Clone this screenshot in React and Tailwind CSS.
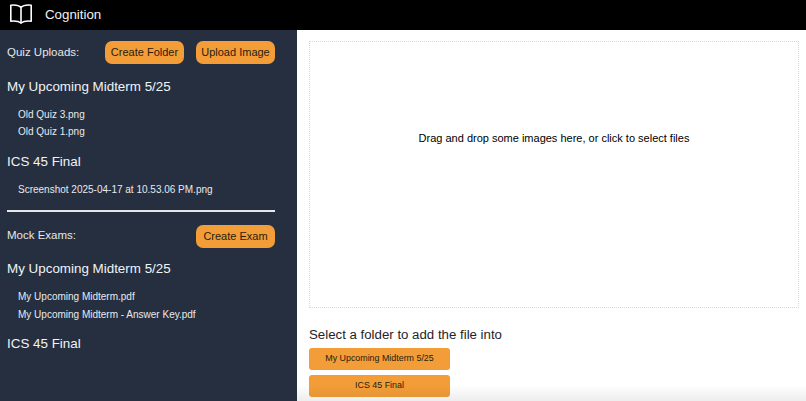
import React from "react";

const font = "font-['Liberation_Sans',Arial,sans-serif]";

function BookIcon() {
  return (
    <svg className="-mt-[3px]" width="24" height="22" viewBox="0 0 24 22" fill="none" stroke="white" strokeWidth="1.6" strokeLinejoin="round" strokeLinecap="round">
      <path d="M12 4.5C10 2.4 6 1.8 1.8 2.2V18.2C6 17.8 9.5 18 12 20C14.5 18 18 17.8 22.2 18.2V2.2C18 1.8 14 2.4 12 4.5Z" />
      <path d="M12 4.5V20" />
    </svg>
  );
}

function SideButton({ children }) {
  return (
    <button className="w-[79px] h-[23px] shrink-0 rounded-[7px] bg-[#f29d38] text-[11px] text-[#2a1c0c] whitespace-nowrap">
      {children}
    </button>
  );
}

function Folder({ name, files }) {
  return (
    <div>
      <h3 className="text-[13.4px] leading-[18px] text-[#f1f3f5]">{name}</h3>
      {files.length > 0 && (
        <ul className="mt-[10px] pl-[11px]">
          {files.map((f) => (
            <li key={f} className="text-[10px] leading-[17.5px] text-[#e8eaed] whitespace-nowrap">{f}</li>
          ))}
        </ul>
      )}
    </div>
  );
}

export default function App() {
  return (
    <div className={`${font} relative w-[806px] h-[401px] overflow-hidden flex flex-col bg-white`}>
      <header className="h-[30px] shrink-0 bg-black flex items-center pl-[9px] gap-[12px]">
        <BookIcon />
        <span className="text-[13.3px] text-[#f2f2f2]">Cognition</span>
      </header>

      <div className="flex flex-1 min-h-0">
        <aside className="w-[297px] shrink-0 bg-[#252f3f] pl-[7px] pr-[22px] pt-[11px]">
          <div className="flex items-center">
            <span className="text-[11.5px] text-[#e5e7eb] flex-1">Quiz Uploads:</span>
            <div className="flex gap-[12px]">
              <SideButton>Create Folder</SideButton>
              <SideButton>Upload Image</SideButton>
            </div>
          </div>

          <div className="mt-[13.5px] flex flex-col gap-[12px]">
            <Folder name="My Upcoming Midterm 5/25" files={["Old Quiz 3.png", "Old Quiz 1.png"]} />
            <Folder name="ICS 45 Final" files={["Screenshot 2025-04-17 at 10.53.06 PM.png"]} />
          </div>

          <hr className="mt-[11.5px] border-0 h-[2px] bg-[#e5e7eb]" />

          <div className="mt-[13px] flex items-center justify-between">
            <span className="text-[11.5px] text-[#e5e7eb]">Mock Exams:</span>
            <SideButton>Create Exam</SideButton>
          </div>

          <div className="mt-[12.5px] flex flex-col gap-[12px]">
            <Folder name="My Upcoming Midterm 5/25" files={["My Upcoming Midterm.pdf", "My Upcoming Midterm - Answer Key.pdf"]} />
            <Folder name="ICS 45 Final" files={[]} />
          </div>
        </aside>

        <main className="flex-1 min-w-0 pl-[12px] pr-[7px] pt-[11px]">
          <div className="h-[267px] border border-dotted border-[#d4d7db] flex items-center justify-center">
            <p className="text-[11px] text-black -mt-[72px]">Drag and drop some images here, or click to select files</p>
          </div>
          <h2 className="mt-[19px] text-[13.25px] leading-[16px] text-[#1f2328]">Select a folder to add the file into</h2>
          <div className="mt-[5px] flex flex-col gap-[5px]">
            <button className="w-[141px] h-[22px] rounded-[3px] bg-[#f29d38] text-[8.9px] text-[#2a1c0c]">My Upcoming Midterm 5/25</button>
            <button className="w-[141px] h-[22px] rounded-[3px] bg-[#f29d38] text-[8.9px] text-[#2a1c0c]">ICS 45 Final</button>
          </div>
        </main>
      </div>

      <div className="absolute left-[297px] right-0 bottom-0 h-[16px] bg-gradient-to-b from-transparent to-[#00000012] pointer-events-none" />
    </div>
  );
}
